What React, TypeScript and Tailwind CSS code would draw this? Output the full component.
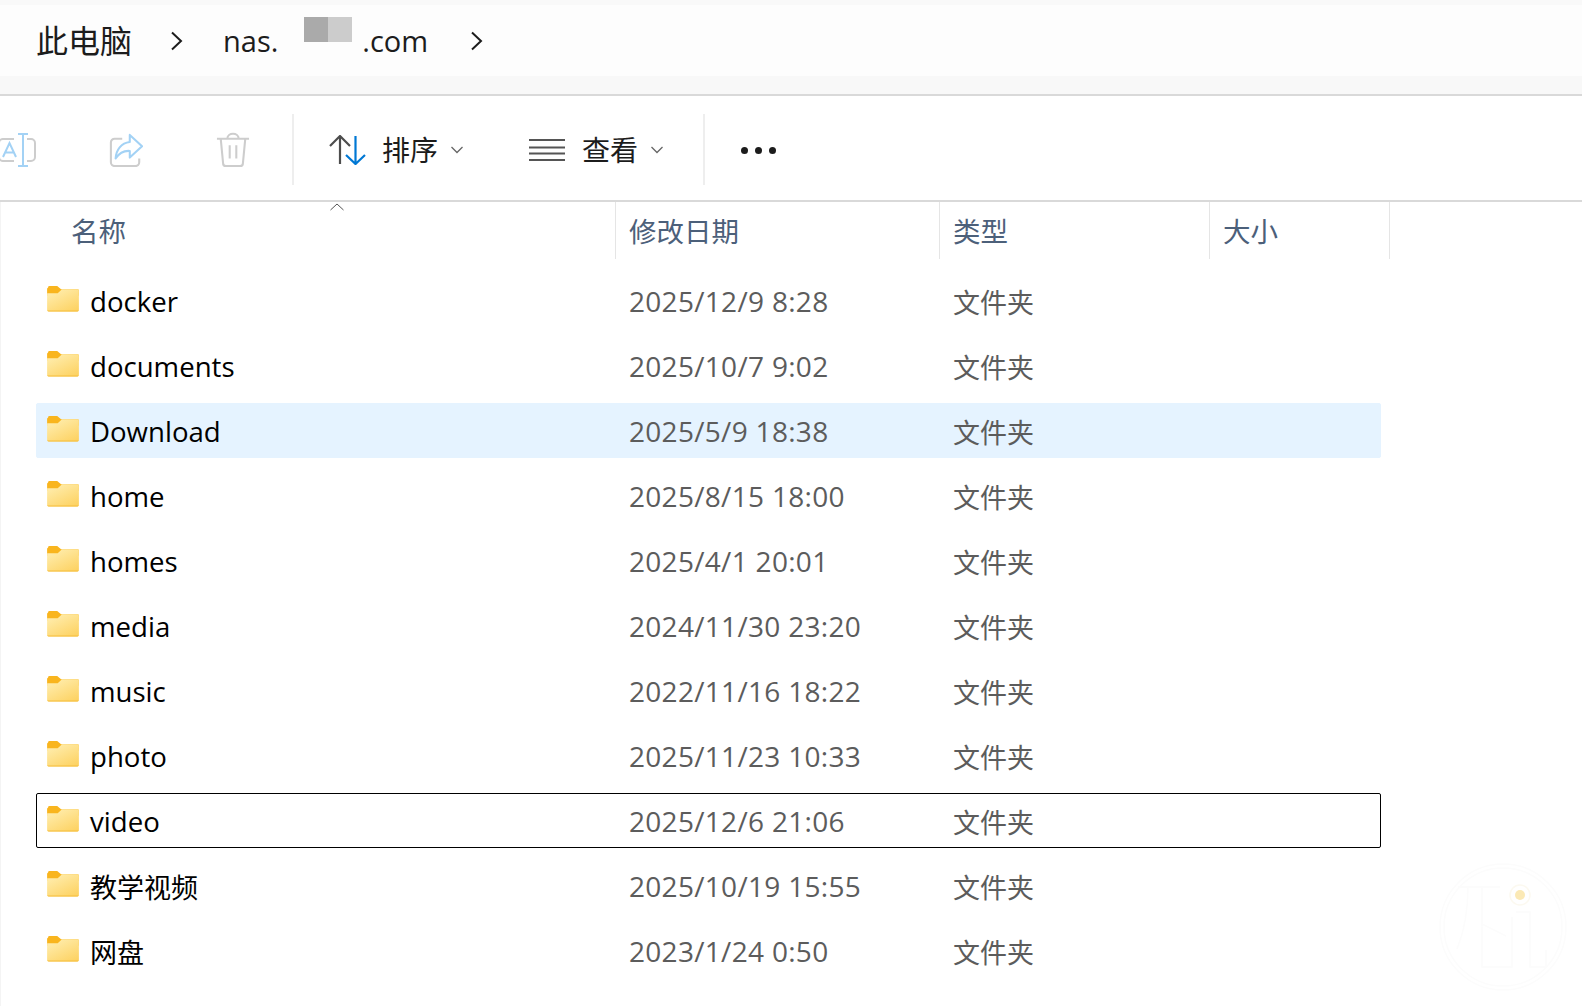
const rows: [string, string][] = [
  ["docker", "2025/12/9 8:28"],
  ["documents", "2025/10/7 9:02"],
  ["Download", "2025/5/9 18:38"],
  ["home", "2025/8/15 18:00"],
  ["homes", "2025/4/1 20:01"],
  ["media", "2024/11/30 23:20"],
  ["music", "2022/11/16 18:22"],
  ["photo", "2025/11/23 10:33"],
  ["video", "2025/12/6 21:06"],
  ["教学视频", "2025/10/19 15:55"],
  ["网盘", "2023/1/24 0:50"],
];

const font = "[font-family:'Open_Sans','Noto_Sans_CJK_SC',sans-serif]";

function Chevron() {
  return (
    <svg width="14" height="20" viewBox="0 0 14 20" fill="none" stroke="#1c1c1c" strokeWidth="2">
      <path d="M2 1.500 11 10 2 18.500" />
    </svg>
  );
}

function SmallChevron() {
  return (
    <svg width="14" height="8" viewBox="0 0 14 8" fill="none" stroke="#666" strokeWidth="1.3">
      <path d="M1.500 1 7 6.500 12.500 1" />
    </svg>
  );
}

function Folder() {
  return (
    <svg width="32" height="26" viewBox="0 0 33 27">
      <defs>
        <linearGradient id="fg" x1="0.15" y1="0" x2="0.85" y2="1">
          <stop offset="0" stopColor="#ffeeb0" />
          <stop offset="1" stopColor="#fdd262" />
        </linearGradient>
      </defs>
      <path d="M1 1.500A1.500 1.500 0 0 1 2.500 0H10.500L14.500 3.500H31.500A1.500 1.500 0 0 1 33 5V10H0V2.500Z" fill="#f9b51e" />
      <path d="M0 7.500 11 7.500 15.500 3.500H31.500A1.500 1.500 0 0 1 33 5V25A1.500 1.500 0 0 1 31.500 26.500H1.500A1.500 1.500 0 0 1 0 25Z" fill="url(#fg)" />
      <path d="M0 25.500H33V25A1.500 1.500 0 0 1 31.500 26.500H1.500A1.500 1.500 0 0 1 0 25Z" fill="#f6bd3c" />
    </svg>
  );
}

function Row({ name, date, index }: { name: string; date: string; index: number }) {
  const hover = index === 2;
  const focus = index === 8;
  const cjk = index > 8;
  return (
    <div
      className={`flex h-[55px] items-center rounded-[2px] border ${
        hover ? "border-[#e5f3ff] bg-[#e5f3ff]" : focus ? "border-black" : "border-transparent"
      }`}
    >
      <div className="ml-[10px] mb-[4px] flex w-[33px] shrink-0">
        <Folder />
      </div>
      <div className={`ml-[10px] w-[539px] shrink-0 text-black ${cjk ? "mt-[5px] text-[27px]" : "mt-[2px] text-[27.6px]"}`}>{name}</div>
      <div className="w-[324px] shrink-0 text-[28px] tracking-[0.3px] text-[#5c5c5c]">{date}</div>
      <div className="mt-[6px] text-[27px] text-[#5c5c5c]">文件夹</div>
    </div>
  );
}

function HeaderCell({ label, className }: { label: string; className: string }) {
  return (
    <div className={`flex h-[57px] shrink-0 items-center pt-[2px] text-[27.500px] text-[#4c607a] ${className}`}>{label}</div>
  );
}

export default function App() {
  return (
    <div className={`relative h-[1006px] w-[1582px] overflow-hidden bg-white ${font}`}>
      <div className="h-[5px] bg-[#f9f9f9]" />
      <div className="flex h-[71px] items-center bg-[#fdfdfd] pl-[36px] text-[#1c1c1c]">
        <span className="text-[32px] leading-none">此电脑</span>
        <span className="ml-[38px] flex"><Chevron /></span>
        <span className="ml-[39px] text-[29px] leading-none">nas.</span>
        <span className="mb-[22px] ml-[26px] flex h-[25px] w-[48px]">
          <span className="w-[24px] bg-[#aaaaaa]" />
          <span className="w-[24px] bg-[#cccccc]" />
        </span>
        <span className="ml-[10px] text-[29px] leading-none">.com</span>
        <span className="ml-[42px] flex"><Chevron /></span>
      </div>
      <div className="h-[18px] bg-[#f8f8f8]" />
      <div className="h-[2px] bg-[#d9d9d9]" />

      <div className="flex h-[104px] items-center pt-[4px] text-[#1c1c1c]">
        <div className="flex w-[292px] shrink-0 items-center">
          <svg width="36" height="36" viewBox="0 0 36 36" fill="none" className="shrink-0">
            <path d="M15 7H4a4 4 0 0 0-4 4v14a4 4 0 0 0 4 4h11" stroke="#cdcdcd" strokeWidth="2" transform="translate(-1 0)" />
            <path d="M27 7h4a4 4 0 0 1 4 4v14a4 4 0 0 1-4 4h-4" stroke="#cdcdcd" strokeWidth="2" />
            <path d="M18 2h10M18 34h10M23 2v32" stroke="#a3d2f5" strokeWidth="2" />
            <path d="M3 25 9.500 11 16 25M5.500 20.500h8" stroke="#a3d2f5" strokeWidth="2" />
          </svg>
          <svg width="34" height="34" viewBox="0 0 36 36" fill="none" className="ml-[73px] shrink-0">
            <path d="M14 6H6a4 4 0 0 0-4 4v21a4 4 0 0 0 4 4h22a4 4 0 0 0 4-4v-4" stroke="#cdcdcd" strokeWidth="2.200" />
            <path d="M22 2 35 14 22 26V19C16 18.500 11 21 7 27 7.500 18 13 10.500 22 9.500Z" stroke="#a3d2f5" strokeWidth="2.200" strokeLinejoin="round" />
          </svg>
          <svg width="34" height="36" viewBox="0 0 36 38" fill="none" className="ml-[73px] shrink-0">
            <path d="M1 7h34M12 7c0-7 12-7 12 0M5 7l2.500 26a3 3 0 0 0 3 3h15a3 3 0 0 0 3-3L31 7M14.500 14v14M21.500 14v14" stroke="#cdcdcd" strokeWidth="2.200" />
          </svg>
        </div>
        <div className="mb-[2px] h-[71px] w-[2px] shrink-0 bg-[#eeeeee]" />
        <div className="ml-[35px] flex w-[374px] shrink-0 items-center">
          <svg width="38" height="30" viewBox="0 0 38 30" fill="none" strokeWidth="2.200" className="shrink-0">
            <path d="M1 11 11 1 21 11M11 1V29" stroke="#4d4d4d" />
            <path d="M17 20 26.500 29 36 20M26.500 1V29" stroke="#0078d4" />
          </svg>
          <span className="ml-[15px] text-[28px] leading-none">排序</span>
          <span className="ml-[12px] flex"><SmallChevron /></span>
          <svg width="36" height="24" viewBox="0 0 36 24" fill="none" stroke="#555" strokeWidth="2" className="ml-[65px] shrink-0">
            <path d="M0 2h36M0 9.500h36M0 15.500h36M0 22h36" />
          </svg>
          <span className="ml-[17px] text-[28px] leading-none">查看</span>
          <span className="ml-[12px] flex"><SmallChevron /></span>
        </div>
        <div className="mb-[2px] h-[71px] w-[2px] shrink-0 bg-[#eeeeee]" />
        <div className="ml-[36px] flex gap-[7px]">
          <span className="size-[7px] rounded-full bg-[#1c1c1c]" />
          <span className="size-[7px] rounded-full bg-[#1c1c1c]" />
          <span className="size-[7px] rounded-full bg-[#1c1c1c]" />
        </div>
      </div>
      <div className="h-[2px] bg-[#d9d9d9]" />

      <div className="relative flex pl-[71px]">
        <svg width="16" height="8" viewBox="0 0 16 8" fill="none" stroke="#555" strokeWidth="1" className="absolute left-[329px] top-[1px]">
          <path d="M1.500 7 8 1l6.500 6" />
        </svg>
        <HeaderCell label="名称" className="w-[545px] border-r border-[#e5e5e5]" />
        <HeaderCell label="修改日期" className="w-[324px] border-r border-[#e5e5e5] pl-[13px]" />
        <HeaderCell label="类型" className="w-[270px] border-r border-[#e5e5e5] pl-[13px]" />
        <HeaderCell label="大小" className="w-[180px] border-r border-[#e5e5e5] pl-[13px]" />
      </div>

      <div className="ml-[36px] mt-[14px] flex w-[1345px] flex-col gap-[10px]">
        {rows.map(([name, date], i) => (
          <Row key={name} name={name} date={date} index={i} />
        ))}
      </div>

      <div className="absolute left-0 top-[202px] h-[804px] w-px bg-[#f4f4f4]" />

      <svg width="130" height="130" viewBox="0 0 130 130" fill="none" stroke="#fcfcfc" strokeWidth="1.500" className="absolute left-[1438px] top-[862px]">
        <circle cx="65" cy="65" r="63" />
        <circle cx="65" cy="65" r="59" />
        <path d="M20 25h42M30 25c0 25-4 45-11 62M44 25v80h30V55M44 62l24 12" />
        <path d="M78 50h14v55h16V88" />
        <circle cx="82" cy="33" r="10" stroke="#fcf9f0" />
        <circle cx="82" cy="33" r="5" fill="#fbe9b5" stroke="none" />
      </svg>
    </div>
  );
}
